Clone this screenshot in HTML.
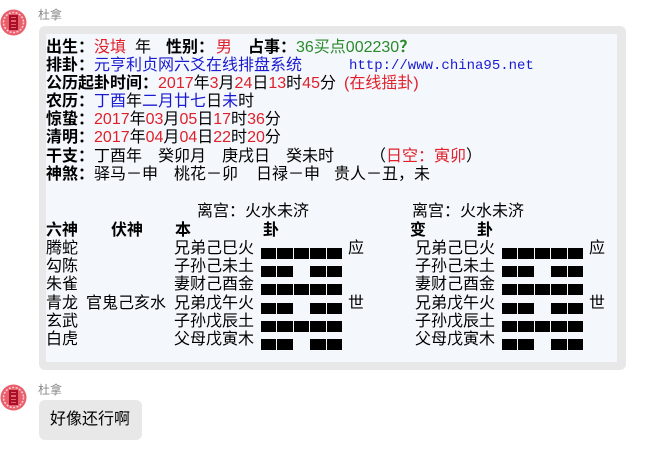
<!DOCTYPE html>
<html><head><meta charset="utf-8"><style>
body{margin:0;width:672px;height:449px;background:#fff;position:relative;overflow:hidden;font-family:"Liberation Sans","Noto Sans CJK SC",sans-serif;}
.a{position:absolute;}
.t{position:absolute;font-size:16px;line-height:18px;white-space:pre;color:#000;}
.r{color:#e0202a}.b{color:#1a1ad0}.g{color:#2a8a2a}
.k{font-weight:bold}
.m{font-family:"Liberation Mono",monospace;font-size:14px;color:#1a1ad0}
.bar{position:absolute;height:11px;background:#000;}
.nm{position:absolute;font-size:12px;color:#888;}
</style></head><body>
<svg class="a" style="left:0;top:9px" width="28" height="28"><circle cx="13.5" cy="13.5" r="13" fill="#e8606a"/><circle cx="13.5" cy="13.5" r="10" fill="none" stroke="#fcd" stroke-width="1.5" stroke-dasharray="2 1.5"/><path d="M10 7h7v13h-7z M11 10h5 M11 14h5 M11 17h5" fill="none" stroke="#a8102a" stroke-width="2"/></svg>
<div class="nm" style="left:38px;top:6px">杜拿</div>
<div class="a" style="left:39px;top:26px;width:587px;height:344px;background:#e8e8e8;border-radius:6px"></div>
<div class="a" style="left:46px;top:34px;width:571px;height:328px;background:#f4f8fc"></div>

<div class="t k" style="left:46px;top:39px">出生：</div>
<div class="t r" style="left:94px;top:39px">没填</div>
<div class="t" style="left:135px;top:39px">年</div>
<div class="t k" style="left:166px;top:39px">性别：</div>
<div class="t r" style="left:216px;top:39px">男</div>
<div class="t k" style="left:248px;top:39px">占事：</div>
<div class="t g" style="left:296px;top:39px">36买点002230<b>？</b></div>
<div class="t" style="left:46px;top:57px"><span class="k">排卦：</span><span class="b">元亨利贞网六爻在线排盘系统</span></div>
<div class="t m" style="left:349px;top:57px">http://www.china95.net</div>
<div class="t" style="left:46px;top:75px"><span class="k">公历起卦时间：</span><span class="r">2017</span>年<span class="r">3</span>月<span class="r">24</span>日<span class="r">13</span>时<span class="r">45</span>分</div>
<div class="t r" style="left:344px;top:75px">(在线摇卦)</div>
<div class="t" style="left:46px;top:93px"><span class="k">农历：</span><span class="b">丁酉</span>年<span class="b">二月廿七</span>日<span class="b">未</span>时</div>
<div class="t" style="left:46px;top:111px"><span class="k">惊蛰：</span><span class="r">2017</span>年<span class="r">03</span>月<span class="r">05</span>日<span class="r">17</span>时<span class="r">36</span>分</div>
<div class="t" style="left:46px;top:129px"><span class="k">清明：</span><span class="r">2017</span>年<span class="r">04</span>月<span class="r">04</span>日<span class="r">22</span>时<span class="r">20</span>分</div>
<div class="t" style="left:46px;top:148px"><span class="k">干支：</span>丁酉年</div>
<div class="t" style="left:158px;top:148px">癸卯月</div>
<div class="t" style="left:222px;top:148px">庚戌日</div>
<div class="t" style="left:286px;top:148px">癸未时</div>
<div class="t" style="left:370px;top:148px">（<span class="r">日空：寅卯</span>）</div>
<div class="t" style="left:46px;top:166px"><span class="k">神煞：</span>驿马－申</div>
<div class="t" style="left:174px;top:166px">桃花－卯</div>
<div class="t" style="left:256px;top:166px">日禄－申</div>
<div class="t" style="left:334px;top:166px">贵人－丑，未</div>

<div class="t" style="left:197px;top:203px">离宫：火水未济</div>
<div class="t" style="left:412px;top:203px">离宫：火水未济</div>
<div class="t k" style="left:46px;top:222px">六神</div>
<div class="t k" style="left:111px;top:222px">伏神</div>
<div class="t k" style="left:175px;top:222px">本</div>
<div class="t k" style="left:263px;top:222px">卦</div>
<div class="t k" style="left:410px;top:222px">变</div>
<div class="t k" style="left:477px;top:222px">卦</div>

<div class="t" style="left:46px;top:240px">腾蛇</div>
<div class="t" style="left:46px;top:258px">勾陈</div>
<div class="t" style="left:46px;top:276px">朱雀</div>
<div class="t" style="left:46px;top:295px">青龙</div>
<div class="t" style="left:46px;top:313px">玄武</div>
<div class="t" style="left:46px;top:331px">白虎</div>
<div class="t" style="left:86px;top:295px">官鬼己亥水</div>

<div class="t" style="left:174px;top:240px">兄弟己巳火</div>
<div class="t" style="left:174px;top:258px">子孙己未土</div>
<div class="t" style="left:174px;top:276px">妻财己酉金</div>
<div class="t" style="left:174px;top:295px">兄弟戊午火</div>
<div class="t" style="left:174px;top:313px">子孙戊辰土</div>
<div class="t" style="left:174px;top:331px">父母戊寅木</div>
<div class="t" style="left:348px;top:240px">应</div>
<div class="t" style="left:348px;top:295px">世</div>

<div class="t" style="left:415px;top:240px">兄弟己巳火</div>
<div class="t" style="left:415px;top:258px">子孙己未土</div>
<div class="t" style="left:415px;top:276px">妻财己酉金</div>
<div class="t" style="left:415px;top:295px">兄弟戊午火</div>
<div class="t" style="left:415px;top:313px">子孙戊辰土</div>
<div class="t" style="left:415px;top:331px">父母戊寅木</div>
<div class="t" style="left:589px;top:240px">应</div>
<div class="t" style="left:589px;top:295px">世</div>

<div id="bars"></div>
<script>
var ys=[248,266,284,303,321,339],yang=[1,0,1,0,1,0],h='';
[261,502].forEach(function(x0){ys.forEach(function(y,i){
 for(var j=0;j<5;j++){ if(!yang[i]&&j==2)continue;
  h+='<div class="bar" style="left:'+(x0+j*16.4)+'px;top:'+y+'px;width:15.4px"></div>';}
});});
document.getElementById('bars').innerHTML=h;
</script>

<svg class="a" style="left:0;top:384px" width="28" height="28"><circle cx="13.5" cy="13.5" r="13" fill="#e8606a"/><circle cx="13.5" cy="13.5" r="10" fill="none" stroke="#fcd" stroke-width="1.5" stroke-dasharray="2 1.5"/><path d="M10 7h7v13h-7z M11 10h5 M11 14h5 M11 17h5" fill="none" stroke="#a8102a" stroke-width="2"/></svg>
<div class="nm" style="left:38px;top:381px">杜拿</div>
<div class="a" style="left:39px;top:400px;width:103px;height:40px;background:#e8e8e8;border-radius:6px"></div>
<div class="t" style="left:50px;top:411px;font-size:16px">好像还行啊</div>
</body></html>
